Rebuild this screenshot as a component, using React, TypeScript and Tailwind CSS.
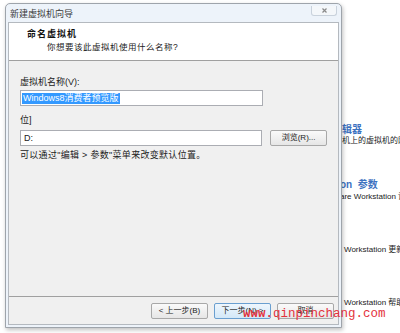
const cjk = "font-['Liberation_Sans','Noto_Sans_CJK_SC',sans-serif]";

function WinButton({ label, primary }: { label: string; primary?: boolean }) {
  return (
    <button
      className={
        "w-[57px] h-[16px] rounded-[2px] border text-[8px] leading-none text-[#222] flex items-center justify-center " +
        (primary
          ? "border-[#6a9fd0] bg-gradient-to-b from-[#eef6fd] to-[#d3e8f8]"
          : "border-[#a8a8a8] bg-gradient-to-b from-[#fafafa] to-[#e6e6e6]")
      }
    >
      {label}
    </button>
  );
}

function BackgroundItems() {
  return (
    <div className="absolute left-[340px] top-0 w-[60px] h-full text-[8px] leading-[12px] whitespace-nowrap text-[#222]">
      <div className="absolute top-[124px] left-[2px] font-bold text-[10px] text-[#3d72bf]">辑器</div>
      <div className="absolute top-[135px] left-[2px]">机上的虚拟机的网络设置</div>
      <div className="absolute top-[179px] left-[0px] font-bold text-[10px] text-[#3d72bf]">on&nbsp;&nbsp;参数</div>
      <div className="absolute top-[191px] left-[0px]">are Workstation 设置</div>
      <div className="absolute top-[244px] left-[4px]">Workstation 更新</div>
      <div className="absolute top-[297px] left-[4px]">Workstation 帮助</div>
    </div>
  );
}

export default function App() {
  return (
    <div className={`relative w-[400px] h-[333px] bg-white overflow-hidden ${cjk}`}>
      <BackgroundItems />

      <div className="relative z-10 ml-[5px] mt-[3px] w-[337px] h-[325px] flex flex-col rounded-t-[5px] border border-[#9ea4ab] bg-[#edf3fa] px-[2px] pb-[2px] shadow-[1px_2px_4px_rgba(0,0,0,0.25)]">
        {/* title bar */}
        <div className="h-[18px] flex items-center justify-between">
          <span className="pl-[2px] pt-[2px] text-[9px] leading-none text-[#3a3a3a]">新建虚拟机向导</span>
          <div className="mr-[2px] -mt-[4px] w-[26px] h-[10px] rounded-b-[3px] border border-t-0 border-[#c9d2dc] bg-[#f4f7fa] flex items-center justify-center">
            <svg width="5" height="5" viewBox="0 0 5 5">
              <path d="M0.5 0.5L4.5 4.5M4.5 0.5L0.5 4.5" stroke="#8a8a8a" strokeWidth="1.2" />
            </svg>
          </div>
        </div>

        {/* client area */}
        <div className="flex-1 flex flex-col border border-[#b4b9bf] bg-[#f0f0f0]">
          <div className="h-[38px] shrink-0 bg-white border-b border-[#a0a0a0] pl-[18px] pt-[5px]">
            <div className="text-[9px] leading-[12px] font-bold tracking-[1px] text-[#111]">命名虚拟机</div>
            <div className="pl-[20px] mt-[1px] text-[8.5px] leading-[12px] tracking-[0.5px] text-[#222]">
              你想要该此虚拟机使用什么名称?
            </div>
          </div>

          <div className="flex-1 px-[11px] pt-[15px] text-[9px] leading-[12px] text-[#222]">
            <div>虚拟机名称(V):</div>
            <div className="mt-[2px] w-[243px] h-[16px] border border-[#abadb3] bg-white flex items-center pl-[1px]">
              <span className="bg-[#3399ff] text-white px-[1px] leading-[11px]">Windows8消费者预览版</span>
            </div>

            <div className="mt-[8px]">位]</div>
            <div className="mt-[4px] flex items-center gap-[8px]">
              <div className="w-[243px] h-[16px] border border-[#abadb3] bg-white flex items-center pl-[3px]">D:</div>
              <WinButton label="浏览(R)..." />
            </div>

            <div className="mt-[3px] tracking-[0.3px]">可以通过"编辑 &gt; 参数"菜单来改变默认位置。</div>
          </div>

          <div className="h-[28px] shrink-0 border-t border-[#a0a0a0] flex items-start justify-end gap-[6px] pt-[6px] pr-[4px]">
            <WinButton label="< 上一步(B)" />
            <WinButton label="下一步(N) >" primary />
            <WinButton label="取消" />
          </div>
        </div>
      </div>

      <div className="absolute z-20 left-[243px] top-[306px] whitespace-nowrap font-['Liberation_Mono',monospace] text-[12.5px] leading-[16px] text-[#e3323c]">
        <span className="font-bold">www.</span>qinpinchang.com
      </div>
    </div>
  );
}
